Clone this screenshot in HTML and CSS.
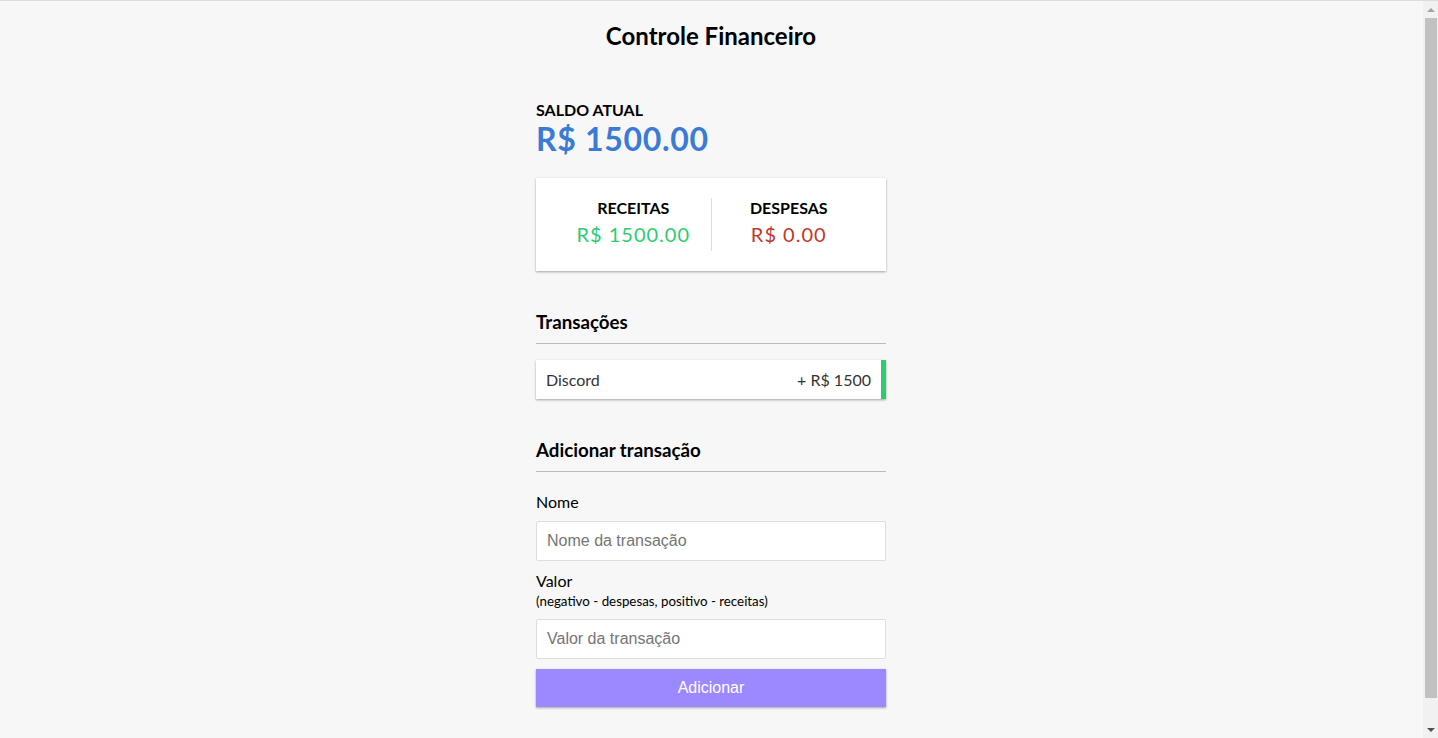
FILE: index.html
```html
<!DOCTYPE html>
<html lang="pt-BR">
<head>
<meta charset="utf-8">
<title>Controle Financeiro</title>
<link rel="stylesheet" href="styles.css">
</head>
<body>
  <h2 class="title">Controle Financeiro</h2>
  <div class="container">
    <h4 class="caption">Saldo atual</h4>
    <h1 class="balance">R$ 1500.00</h1>

    <div class="inc-exp">
      <div class="inc-exp-col inc-exp-first">
        <h4 class="caption">Receitas</h4>
        <p class="money plus">R$ 1500.00</p>
      </div>
      <div class="inc-exp-col">
        <h4 class="caption">Despesas</h4>
        <p class="money minus">R$ 0.00</p>
      </div>
    </div>

    <h3 class="section-title">Transações</h3>
    <ul class="list">
      <li class="list-item plus-item">Discord <span>+ R$ 1500</span></li>
    </ul>

    <h3 class="section-title">Adicionar transação</h3>
    <form class="form">
      <div class="form-control">
        <label class="label" for="text">Nome</label>
        <input class="input" type="text" id="text" placeholder="Nome da transação">
      </div>
      <div class="form-control">
        <label class="label" for="amount">Valor <br><small class="hint">(negativo - despesas, positivo - receitas)</small></label>
        <input class="input" type="number" id="amount" placeholder="Valor da transação">
      </div>
      <button class="btn" type="button">Adicionar</button>
    </form>
  </div>

  <div class="scrollbar" aria-hidden="true">
    <div class="sb-btn">
      <svg width="8" height="4" viewBox="0 0 8 4"><polygon points="0,4 8,4 4,0" fill="#a3a3a3"/></svg>
    </div>
    <div class="sb-track"><div class="sb-thumb"></div></div>
    <div class="sb-btn">
      <svg width="8" height="4" viewBox="0 0 8 4"><polygon points="0,0 8,0 4,4" fill="#505050"/></svg>
    </div>
  </div>
</body>
</html>
```
FILE: styles.css
```css
* {
  box-sizing: border-box;
}

html {
  border-top: 1px solid #dcdcdc;
}

body {
  background-color: #f7f7f7;
  display: flex;
  flex-direction: column;
  align-items: center;
  justify-content: center;
  min-height: 100vh;
  margin: 0;
  padding-right: 16px;
  font-family: Lato, "Liberation Sans", sans-serif;
  color: #000;
}

.scrollbar {
  position: fixed;
  top: 1px;
  right: 0;
  bottom: 0;
  width: 15px;
  background: #f1f1f1;
  display: flex;
  flex-direction: column;
}

.sb-btn {
  height: 17px;
  display: flex;
  align-items: center;
  justify-content: center;
  flex: none;
}

.sb-track {
  flex: 1;
  display: flex;
  flex-direction: column;
  padding: 0 1px 0 2px;
}

.sb-thumb {
  flex: 1;
  background: #c1c1c1;
  margin-bottom: 23px;
}

.title {
  font-size: 24px;
  margin: 19.92px 0;
}

.container {
  margin: 30px auto;
  width: 350px;
}

.caption {
  margin: 0;
  font-size: 16px;
  text-transform: uppercase;
}

.balance {
  letter-spacing: 0.7px;
  margin: 0;
  font-size: 32px;
  color: #3a7bd5;
}

.inc-exp {
  background-color: #fff;
  box-shadow: 0 1px 3px rgba(0, 0, 0, 0.12), 0 1px 2px rgba(0, 0, 0, 0.24);
  padding: 20px;
  display: flex;
  justify-content: space-between;
  margin: 20px 0;
}

.inc-exp-col {
  flex: 1;
  text-align: center;
}

.inc-exp-first {
  border-right: 1px solid #dedede;
}

.money {
  font-size: 20px;
  letter-spacing: 1px;
  margin: 5px 0;
}

.money.plus {
  color: #2ecc71;
}

.money.minus {
  color: #c0392b;
}

.section-title {
  font-size: 18.72px;
  border-bottom: 1px solid #bbb;
  padding-bottom: 10px;
  margin: 40px 0 10px;
}

.list {
  list-style-type: none;
  padding: 0;
  margin-bottom: 40px;
  margin-top: 16px;
}

.list-item {
  background-color: #fff;
  box-shadow: 0 1px 3px rgba(0, 0, 0, 0.12), 0 1px 2px rgba(0, 0, 0, 0.24);
  color: #333;
  display: flex;
  justify-content: space-between;
  padding: 10px;
  margin: 10px 0;
  font-size: 16px;
}

.plus-item {
  border-right: 5px solid #2ecc71;
}

.form {
  margin: 0;
}

.label {
  display: inline-block;
  margin: 10px 0;
  font-size: 16px;
}

.hint {
  font-size: 13.33px;
}

.input {
  border: 1px solid #dedede;
  border-radius: 2px;
  display: block;
  font-size: 16px;
  font-family: "Liberation Sans", Arial, sans-serif;
  padding: 10px;
  width: 100%;
  background: #fff;
  color: #333;
}

.input::placeholder {
  color: #757575;
}

.btn {
  cursor: pointer;
  background-color: #9c88ff;
  box-shadow: 0 1px 3px rgba(0, 0, 0, 0.12), 0 1px 2px rgba(0, 0, 0, 0.24);
  color: #fff;
  border: 0;
  display: block;
  font-size: 16px;
  font-family: "Liberation Sans", Arial, sans-serif;
  margin: 10px 0 30px;
  padding: 10px;
  width: 100%;
}
```
